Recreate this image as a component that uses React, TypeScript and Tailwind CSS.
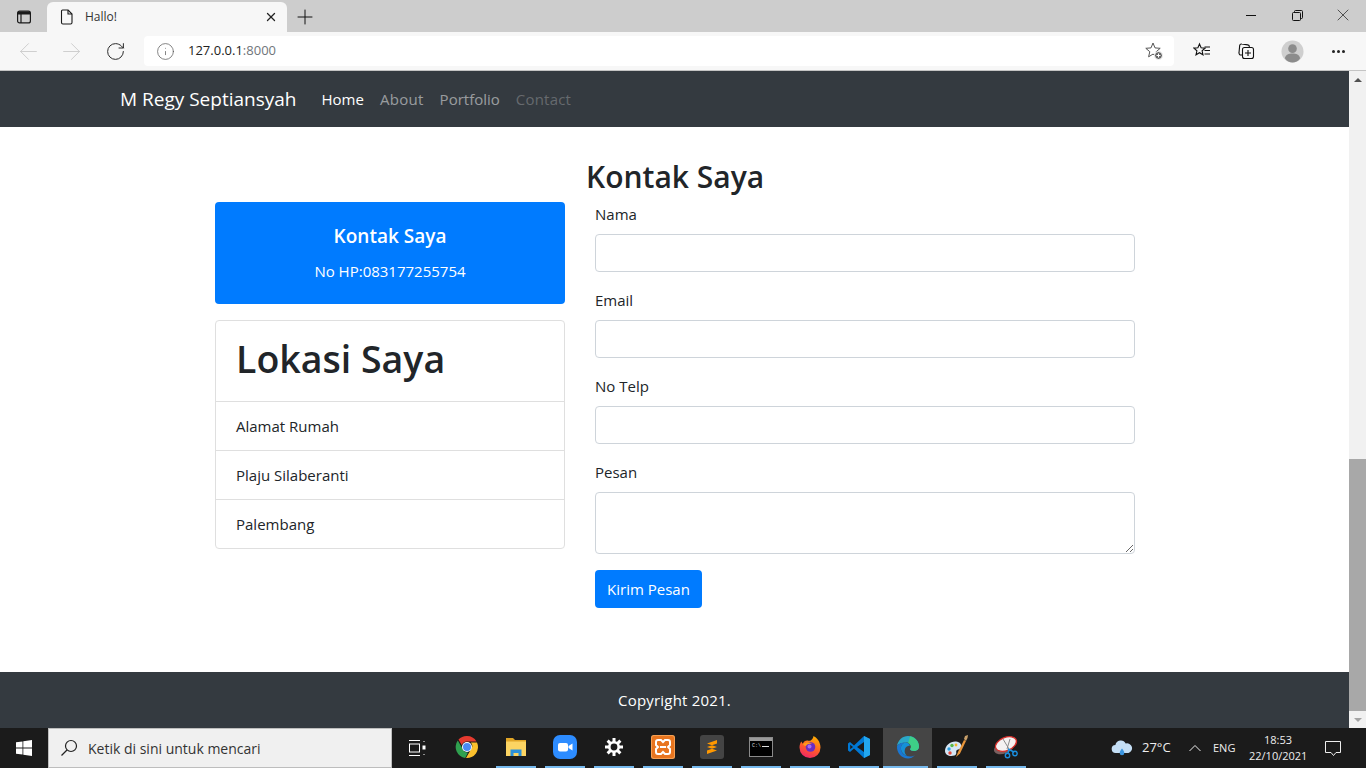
import React from 'react';
import { ArrowLeft, ArrowRight, RotateCw, Info, X, Plus } from 'lucide-react';

const Field = ({ label, tall }: { label: string; tall?: boolean }) => (
  <div className="mb-[16px]">
    <label className="block text-[15px] leading-[24px] text-[#212529] mb-[8px]">{label}</label>
    {tall ? (
      <textarea className="block w-full h-[62px] bg-white border border-[#ced4da] rounded-[4px]" />
    ) : (
      <input className="block w-full h-[38px] bg-white border border-[#ced4da] rounded-[4px]" />
    )}
  </div>
);

const TaskIcon = ({ children, active, noBar }: { children: React.ReactNode; active?: boolean; noBar?: boolean }) => (
  <div className={`relative w-[49px] h-[40px] flex items-center justify-center pb-[2px] ${active ? 'bg-[#454545]' : ''}`}>
    {children}
    {!noBar && <div className={`absolute bottom-0 right-[4px] h-[2px] bg-[#76b9ed] ${active ? 'left-0 right-0' : 'left-[5px]'}`} />}
  </div>
);

function BrowserChrome() {
  return (
    <div className="h-[71px] shrink-0 bg-[#cdcdcd]">
      <div className="h-[32px] flex items-end">
        <div className="w-[47px] h-[30px] flex items-center justify-center">
          <svg width="16" height="16" viewBox="0 0 16 16" fill="none" stroke="#1a1a1a" strokeWidth="1.2">
            <rect x="1.6" y="2.1" width="12.8" height="11.8" rx="2" />
            <path d="M1.6 5h12.8M5 5v8.9" />
            <rect x="2" y="2.500" width="12" height="2.500" fill="#1a1a1a" stroke="none" />
          </svg>
        </div>
        <div className="w-[240px] h-[30px] bg-[#f7f7f7] rounded-t-[6px] flex items-center pl-[13px] pr-[9px]">
          <svg width="14" height="16" viewBox="0 0 14 16" fill="none" stroke="#1a1a1a" strokeWidth="1.1">
            <path d="M2.500 1h5.600l3.900 4v8.600a1.400 1.400 0 0 1-1.400 1.400H2.900a1.400 1.400 0 0 1-1.400-1.400V2a1 1 0 0 1 1-1z" />
            <path d="M8 1v4h4" />
          </svg>
          <span className="ml-[11px] text-[12px] text-[#333] flex-1">Hallo!</span>
          <X size={14} strokeWidth={2.2} className="text-[#222]" />
        </div>
        <div className="w-[36px] h-[30px] flex items-center justify-center">
          <Plus size={24} strokeWidth={1} className="text-[#111]" />
        </div>
        <div className="flex-1" />
        <div className="w-[46px] h-[30px] flex items-center justify-center mb-[2px]">
          <svg width="10" height="10" viewBox="0 0 10 10" stroke="#111"><path d="M0 5.500h10" /></svg>
        </div>
        <div className="w-[46px] h-[30px] flex items-center justify-center mb-[2px]">
          <svg width="11" height="11" viewBox="0 0 11 11" fill="none" stroke="#111" strokeWidth="1">
            <rect x=".5" y="2.500" width="8" height="8" rx="1" />
            <path d="M2.500 2.500v-1a1 1 0 0 1 1-1h6a1 1 0 0 1 1 1v6a1 1 0 0 1-1 1h-1" />
          </svg>
        </div>
        <div className="w-[46px] h-[30px] flex items-center justify-center mb-[2px]"><X size={20} strokeWidth={0.8} className="text-[#111]" /></div>
      </div>
      <div className="h-[39px] bg-[#f7f7f7] border-b border-[#c4c4c4] flex items-center">
        <div className="w-[56px] flex justify-center"><ArrowLeft size={27} strokeWidth={0.8} className="text-[#c9c9c9]" /></div>
        <div className="w-[30px] flex justify-center"><ArrowRight size={27} strokeWidth={0.8} className="text-[#c9c9c9]" /></div>
        <div className="w-[58px] flex justify-center"><RotateCw size={21} strokeWidth={1.1} className="text-[#222]" /></div>
        <div className="w-[1030px] h-[30px] bg-white rounded-[4px] flex items-center pl-[12px] pr-[10px]">
          <Info size={19} strokeWidth={0.9} className="text-[#555]" />
          <span className="ml-[13px] text-[13px] text-[#222]">127.0.0.1<span className="text-[#70757a]">:8000</span></span>
          <div className="flex-1" />
          <svg width="20" height="20" viewBox="0 0 20 20" fill="none" stroke="#555" strokeWidth="1">
            <path d="M9 2l2 4.900 5.200.4-4 3.400 1.200 5.100L9 13.100l-4.400 2.700 1.200-5.100-4-3.400 5.200-.4z" />
            <circle cx="14.500" cy="14.500" r="4" fill="#666" stroke="#fff" />
            <path d="M14.500 12.500v4M12.500 14.500h4" stroke="#fff" />
          </svg>
        </div>
        <div className="w-[56px] flex justify-center">
          <svg width="18" height="18" viewBox="0 0 18 18" fill="none" stroke="#111" strokeWidth="1.100">
            <path d="M6.500 2l1.600 3.800 4 .3-3 2.700.9 4-3.500-2.100L3 12.800l.9-4-3-2.700 4-.3z" />
            <path d="M11.500 5h5.500M11.500 8.500h5.500M11.500 12h5.500" />
          </svg>
        </div>
        <div className="w-[32px] flex justify-center">
          <svg width="18" height="18" viewBox="0 0 18 18" fill="none" stroke="#111" strokeWidth="1.100">
            <path d="M5 13H4a2 2 0 0 1-2-2.300L2.700 3.400A1.800 1.800 0 0 1 4.800 2l6 .9a2 2 0 0 1 1.600 2" />
            <rect x="5.500" y="5.500" width="11" height="11" rx="2" fill="#f7f7f7" />
            <path d="M11 8v6M8 11h6" />
          </svg>
        </div>
        <div className="w-[60px] flex justify-center">
          <svg width="23" height="23" viewBox="0 0 24 24">
            <circle cx="12" cy="12" r="11.500" fill="#cfcfcf" />
            <circle cx="12" cy="9" r="4.500" fill="#8c8c8c" />
            <path d="M4 19c1-4 4-5 8-5s7 1 8 5c-2 3-5 4.500-8 4.500S6 22 4 19z" fill="#8c8c8c" />
          </svg>
        </div>
        <div className="flex-1 flex justify-center gap-[2px] pr-[11px]">
          <span className="w-[3px] h-[3px] rounded-full bg-[#222]" />
          <span className="w-[3px] h-[3px] rounded-full bg-[#222]" />
          <span className="w-[3px] h-[3px] rounded-full bg-[#222]" />
        </div>
      </div>
    </div>
  );
}

function Scrollbar() {
  return (
    <div className="w-[17px] shrink-0 bg-[#f1f1f1] flex flex-col items-center">
      <div className="h-[17px] flex items-center justify-center">
        <div className="w-0 h-0 border-l-[4px] border-r-[4px] border-b-[4px] border-l-transparent border-r-transparent border-b-[#505050]" />
      </div>
      <div className="h-[371px]" />
      <div className="w-full h-[252px] bg-[#a8a8a8]" />
      <div className="flex-1 flex items-center justify-center">
        <div className="w-0 h-0 border-l-[4px] border-r-[4px] border-t-[4px] border-l-transparent border-r-transparent border-t-[#a3a3a3]" />
      </div>
    </div>
  );
}

function Taskbar() {
  return (
    <div className="h-[40px] shrink-0 bg-[#1b1b1b] flex items-center text-white font-['Open_Sans','Noto_Sans',sans-serif]">
      <div className="w-[48px] flex justify-center">
        <svg width="16" height="16" viewBox="0 0 16 16" fill="#fff">
          <path d="M0 2.300l6.500-.9v6.200H0zM7.300 1.300L16 0v7.600H7.300zM0 8.400h6.500v6.200L0 13.700zM7.300 8.400H16V16l-8.700-1.300z" />
        </svg>
      </div>
      <div className="w-[344px] h-[40px] bg-[#f0f0f0] border border-[#bdbdbd] flex items-center pl-[11px]">
        <svg width="18" height="18" viewBox="0 0 18 18" fill="none" stroke="#222" strokeWidth="1.200">
          <circle cx="11" cy="7" r="5.500" />
          <path d="M7 11l-5.500 5.500" />
        </svg>
        <span className="ml-[10px] text-[14px] text-[#333]">Ketik di sini untuk mencari</span>
      </div>
      <div className="w-[50px] flex justify-center">
        <svg width="18" height="16" viewBox="0 0 18 16" fill="none" stroke="#fff" strokeWidth="1">
          <path d="M1 .5h11M1 15.500h11M16 1v1M16 14v1" />
          <rect x="1.500" y="4" width="10" height="8" />
          <rect x="14.500" y="5.500" width="3" height="4" fill="#fff" stroke="none" />
        </svg>
      </div>

      <TaskIcon noBar>
        <svg width="24" height="24" viewBox="0 0 24 24">
          <path d="M12 1a11 11 0 0 1 9.500 5.500H12a5.500 5.500 0 0 0-5.200 3.700L3.500 4.600A11 11 0 0 1 12 1z" fill="#e53a2f" />
          <path d="M2.800 5.500l5 8.700A5.500 5.500 0 0 0 13 17.400l-2.800 5.500A11 11 0 0 1 2.800 5.500z" fill="#2fa04f" />
          <path d="M22 7.500A11 11 0 0 1 11 23l4.700-8.200a5.500 5.500 0 0 0 .1-7.300z" fill="#fbc02d" />
          <circle cx="12" cy="12" r="5" fill="#fff" />
          <circle cx="12" cy="12" r="4" fill="#4a8af4" />
        </svg>
      </TaskIcon>
      <TaskIcon>
        <svg width="22" height="20" viewBox="0 0 22 20">
          <path d="M1 1h7l2 2h11v4H1z" fill="#e0a526" />
          <rect x="1" y="4.500" width="20" height="14.500" fill="#fcd462" />
          <path d="M5.500 19v-6.500h11V19h-3v-3h-5v3z" fill="#2b90d9" />
        </svg>
      </TaskIcon>
      <TaskIcon>
        <svg width="24" height="24" viewBox="0 0 24 24">
          <rect width="24" height="24" rx="7" fill="#2d8cff" />
          <rect x="5" y="8" width="10" height="8.500" rx="2" fill="#fff" />
          <path d="M15.500 11l4-2.500v7l-4-2.500z" fill="#fff" />
        </svg>
      </TaskIcon>
      <TaskIcon>
        <svg width="20" height="20" viewBox="0 0 20 20" fill="none" stroke="#fff">
          <circle cx="10" cy="10" r="4.700" strokeWidth="2.600" />
          <path d="M10 1v4M10 15v4M1 10h4M15 10h4M3.600 3.600l2.800 2.800M13.600 13.600l2.800 2.800M3.600 16.400l2.800-2.800M13.600 6.400l2.800-2.800" strokeWidth="3" />
        </svg>
      </TaskIcon>
      <TaskIcon>
        <svg width="24" height="24" viewBox="0 0 24 24">
          <rect width="24" height="24" rx="2.500" fill="#f6a052" />
          <rect x="1" y="1" width="22" height="22" rx="2" fill="#e8751f" />
          <path d="M7 5h3l2 2 2-2h3a2 2 0 0 1 2 2v3l-2 2 2 2v3a2 2 0 0 1-2 2h-3l-2-2-2 2H7a2 2 0 0 1-2-2v-3l2-2-2-2V7a2 2 0 0 1 2-2z" fill="none" stroke="#fff" strokeWidth="2" />
          <path d="M9 12h6" stroke="#fff" strokeWidth="2" />
        </svg>
      </TaskIcon>
      <TaskIcon>
        <svg width="24" height="24" viewBox="0 0 24 24">
          <rect width="24" height="24" rx="3" fill="#444" />
          <path d="M17 5v3.600L7 12V8.400zM7 8.500V12l10 3.400v-3.500zM17 11.900v3.600L7 19v-3.600z" fill="#ff9800" />
        </svg>
      </TaskIcon>
      <TaskIcon>
        <svg width="24" height="20" viewBox="0 0 24 20">
          <rect x=".5" y=".5" width="23" height="19" fill="#000" stroke="#8a8a8a" />
          <rect x="1" y="1" width="22" height="3" fill="#9a9a9a" />
          <text x="3" y="10" fontSize="5" fill="#ddd" fontFamily="'Liberation Mono',monospace">C:\</text>
          <path d="M13 9.500h7" stroke="#ddd" />
        </svg>
      </TaskIcon>
      <TaskIcon>
        <svg width="24" height="24" viewBox="0 0 24 24">
          <defs>
            <linearGradient id="ff" x1="0.700" y1="0" x2="0.300" y2="1">
              <stop offset="0" stopColor="#ffb000" />
              <stop offset="0.550" stopColor="#ff5a2a" />
              <stop offset="1" stopColor="#f0246a" />
            </linearGradient>
          </defs>
          <path d="M12 23a10.500 10.500 0 0 1-10.500-10.500c0-2.500.8-4.800 2-6 .2 1 .7 1.800 1.400 2.200C6 5.500 9 5 11 6c1.500-.2 4-1.500 4.500-5 3 1.500 7 5.500 7 11.500A10.500 10.500 0 0 1 12 23z" fill="url(#ff)" />
          <circle cx="12.500" cy="12" r="4.800" fill="#6a2cc0" />
          <circle cx="11.500" cy="11.500" r="2" fill="#a56bf0" />
          <path d="M5 9c3-2 7-2 9 0-3-.5-5 .5-6 2-1.500 0-2.500-1-3-2z" fill="#ff9a1a" />
        </svg>
      </TaskIcon>
      <TaskIcon>
        <svg width="24" height="24" viewBox="0 0 24 24">
          <path d="M17 1l6 3v16l-6 3-10-9.500L3 17l-2-1.500v-7L3 7l4 3.500z" fill="#0078d4" />
          <path d="M17 1l6 3v16l-6 3z" fill="#22a7f0" />
          <path d="M17 7l-7 5 7 5z" fill="#1b1b1b" />
          <path d="M3.200 9.800L6 12l-2.800 2.200z" fill="#1b1b1b" />
        </svg>
      </TaskIcon>
      <TaskIcon active>
        <svg width="24" height="24" viewBox="0 0 24 24">
          <path d="M1 11C2 5 6.500 1 12 1c6.500 0 11 5 11 10.500 0 3-2.500 4.500-5 4.500-2.500 0-4-1-4-2 2-1.500 1.500-6-3-6.500C6 7.500 2.500 8.500 1 11z" fill="#2aa8c8" />
          <path d="M14 1.200c4.500.8 9 4.800 9 10.300 0 3-2.500 4.500-5 4.500-2 0-3.300-.6-3.800-1.400 1.300-2.600.8-5.400-2.200-6.600 1-2.500 1.500-5 2-6.800z" fill="#3ecf87" />
          <path d="M1 11c1.500-2.500 5-3.500 8-3.500-3 1-4.500 4-4 7 .5 4 4 7 9 7 2 0 3.500-.5 5-1.500-2 2.500-4.500 3.500-7 3.500C6 23.500.5 18.500 1 11z" fill="#1a77d2" />
          <path d="M9 7.500c-3 1-4.500 4-4 7 .5 3 3 5.500 6 6.500-2-2-3-4-2-7 .5-2 2-3 5-3.500-.5-2-2.500-3-5-3z" fill="#1590d8" />
        </svg>
      </TaskIcon>
      <TaskIcon>
        <svg width="26" height="26" viewBox="0 0 26 26">
          <path d="M1 17C1 11 7 7 12 7.500c4 .4 6 3 5 6-.7 2-3.500 1.500-4.500 3s1 3.500-2 5C6 23 1 21 1 17z" fill="#d5e6f5" />
          <circle cx="5" cy="15" r="1.700" fill="#2f9fe0" />
          <circle cx="8" cy="11.500" r="1.700" fill="#58b947" />
          <circle cx="12" cy="11" r="1.400" fill="#f5b32a" />
          <circle cx="6" cy="19" r="1.700" fill="#e5483b" />
          <path d="M20 6l-6 12-2 5 4-3.500L22 7z" fill="#e8953a" />
          <path d="M20 5l1-3 3-1-.5 3-1.500 3z" fill="#c9a06a" />
        </svg>
      </TaskIcon>
      <TaskIcon>
        <svg width="26" height="26" viewBox="0 0 26 26" fill="none">
          <ellipse cx="11" cy="13.500" rx="10.500" ry="6" transform="rotate(-22 11 13.500)" fill="#7a5f5f" />
          <ellipse cx="13" cy="10" rx="11" ry="6.500" transform="rotate(-22 13 10)" fill="#f5f2f2" stroke="#d9302c" strokeWidth="1.300" />
          <path d="M10 5l6 10M17 5l-3 10" stroke="#8c8c8c" strokeWidth="1" />
          <path d="M16 15l-1 4M15 15l6 3" stroke="#1a8fe0" strokeWidth="1.500" />
          <circle cx="14.500" cy="21.500" r="2.200" stroke="#1a8fe0" strokeWidth="1.400" />
          <circle cx="22" cy="19.500" r="2.200" stroke="#1a8fe0" strokeWidth="1.400" />
        </svg>
      </TaskIcon>

      <div className="flex-1" />
      <div className="flex items-center">
        <svg width="22" height="18" viewBox="0 0 22 18">
          <path d="M5 14a4 4 0 0 1-.6-8A5.500 5.500 0 0 1 14.700 4.500 4.800 4.800 0 0 1 17.500 14z" fill="#c4def5" />
          <path d="M11 9.500c1.500 2 2.300 3.200 2.300 4.500a2.300 2.300 0 0 1-4.600 0c0-1.300.8-2.500 2.300-4.500z" fill="#3a95e0" />
        </svg>
        <span className="ml-[9px] w-[29px] text-[13px] text-[#eee] whitespace-nowrap">27°C</span>
        <svg className="ml-[18px]" width="12" height="8" viewBox="0 0 12 8" fill="none" stroke="#eee"><path d="M.5 7L6 1.500 11.500 7" /></svg>
        <span className="ml-[12px] w-[23px] text-[11px] text-[#eee]">ENG</span>
        <div className="ml-[13px] w-[58px] text-[11px] leading-[16px] text-center text-[#eee]">
          <div>18:53</div>
          <div>22/10/2021</div>
        </div>
        <svg className="ml-[18px] mr-[25px]" width="16" height="15" viewBox="0 0 16 15" fill="none" stroke="#eee"><path d="M.5.500h15v11H11l-2.500 3-2.500-3H.5z" /></svg>
      </div>
    </div>
  );
}

export default function App() {
  const font = "font-['Open_Sans','Noto_Sans',sans-serif]";
  return (
    <div className={`h-[768px] w-[1366px] flex flex-col overflow-hidden bg-white ${font}`}>
      <BrowserChrome />
      <div className="h-[657px] flex">
        <div className="flex-1 flex flex-col">
          <nav className="h-[56px] shrink-0 bg-[#343a40] flex items-center pl-[120px]">
            <span className="text-[19px] text-white">M Regy Septiansyah</span>
            <div className="ml-[25px] flex gap-[16px] text-[15px]">
              <span className="text-white">Home</span>
              <span className="text-white/50 tracking-[0.3px]">About</span>
              <span className="text-white/50">Portfolio</span>
              <span className="text-white/25 tracking-[0.2px]">Contact</span>
            </div>
          </nav>
          <main className="flex-1 flex pl-[215px] pt-[31px]">
            <div className="w-[350px] pt-[44px]">
              <div className="h-[102px] bg-[#007bff] rounded-[4px] text-white text-center flex flex-col items-center pt-[20px]">
                <h5 className="text-[19px] leading-[24px] font-semibold mb-[11px] mt-[2px]">Kontak Saya</h5>
                <p className="text-[15px] leading-[24px]">No HP:083177255754</p>
              </div>
              <div className="mt-[16px] border border-[#dfdfdf] rounded-[4px] text-[#212529]">
                <div className="h-[80px] flex items-center px-[20px] pb-[3px] text-[37.5px] font-semibold">Lokasi Saya</div>
                {['Alamat Rumah', 'Plaju Silaberanti', 'Palembang'].map((t) => (
                  <div key={t} className="h-[49px] border-t border-[#dfdfdf] flex items-center px-[20px] text-[15px]">{t}</div>
                ))}
              </div>
            </div>
            <div className="ml-[30px] w-[540px]">
              <h1 className="-ml-[9px] h-[44px] text-[30px] leading-[38px] font-semibold text-[#212529]">Kontak Saya</h1>
              <Field label="Nama" />
              <Field label="Email" />
              <Field label="No Telp" />
              <Field label="Pesan" tall />
              <button className="h-[38px] w-[107px] bg-[#007bff] text-white text-[15px] rounded-[4px]">Kirim Pesan</button>
            </div>
          </main>
          <footer className="h-[56px] shrink-0 bg-[#343a40] flex items-center justify-center text-white text-[15px] tracking-[0.2px]">Copyright 2021.</footer>
        </div>
        <Scrollbar />
      </div>
      <Taskbar />
    </div>
  );
}
